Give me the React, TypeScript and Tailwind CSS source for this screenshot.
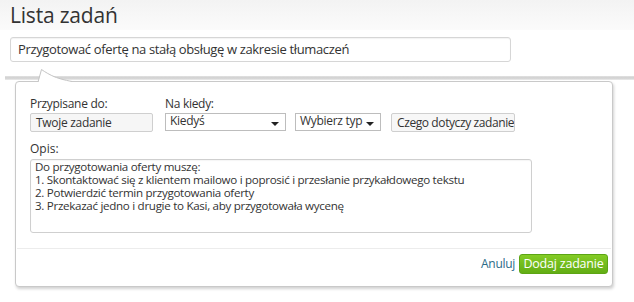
import React from "react";

export default function App() {
  return (
    <div
      className="relative w-[634px] h-[302px] overflow-hidden bg-white text-[#333]"
      style={{ fontFamily: '"Open Sans", "DejaVu Sans", sans-serif' }}
    >
      <div className="h-[30px] bg-gradient-to-b from-[#f3f3f3] to-[#fbfbfb] pl-[10px] pt-[1px]">
        <h1 className="text-[21px] leading-[28px] text-[#333] tracking-[-0.2px]">Lista zadań</h1>
      </div>
      <div className="ml-[10px] mt-[7px] w-[501px] h-[25px] border border-[#d6d6d6] rounded-[3px] px-[7px] flex items-center text-[13px] tracking-[-0.35px] shadow-[inset_0_1px_1px_rgba(0,0,0,0.05)]">
        Przygotować ofertę na stałą obsługę w zakresie tłumaczeń
      </div>
      <div className="mt-[14px] ml-[5px] h-[4px] bg-gradient-to-b from-[#e2e2e2] via-[#cfcfcf] to-[#ececec]" />
      <div className="relative ml-[15px] mt-[1px] w-[598px] h-[206px] bg-white border border-[#c9c9c9] rounded-[4px] shadow-[1px_2px_3px_rgba(0,0,0,0.18)] flex flex-col">
        <div className="px-[14px] pt-[14px]">
          <div className="flex text-[12px] tracking-[-0.3px]">
            <div className="w-[135px]">
              <div className="h-[16px] leading-[16px]">Przypisane do:</div>
              <div className="mt-[1px] w-[123px] h-[19px] border border-[#cfcfcf] rounded-[2px] bg-[#f6f6f6] px-[5px] leading-[17px]">Twoje zadanie</div>
            </div>
            <div className="w-[130px]">
              <div className="h-[16px] leading-[16px]">Na kiedy:</div>
              <div className="mt-[1px] w-[121px] h-[18px] border border-[#bdbdbd] bg-white pl-[4px] pr-[6px] flex justify-between leading-[14px]">
                <span>Kiedyś</span>
                <span className="mt-[8px] w-0 h-0 border-x-[4px] border-x-transparent border-t-[4px] border-t-[#222]" />
              </div>
            </div>
            <div className="w-[96px] pt-[17px]">
              <div className="w-[86px] h-[18px] border border-[#bdbdbd] bg-white pl-[4px] pr-[6px] flex justify-between leading-[14px]">
                <span>Wybierz typ</span>
                <span className="mt-[8px] w-0 h-0 border-x-[4px] border-x-transparent border-t-[4px] border-t-[#222]" />
              </div>
            </div>
            <div className="pt-[17px]">
              <div className="w-[124px] h-[19px] border border-[#cfcfcf] rounded-[2px] bg-[#f7f7f7] pl-[5px] leading-[17px] overflow-hidden whitespace-nowrap tracking-[-0.4px]">Czego dotyczy zadanie?</div>
            </div>
          </div>
          <div className="mt-[9px] text-[12px] h-[16px] leading-[16px]">Opis:</div>
          <div className="mt-[2px] w-[502px] h-[74px] border border-[#cfcfcf] rounded-[3px] px-[4px] pt-[0px] text-[11.6px] leading-[13px] tracking-[-0.3px] shadow-[inset_0_1px_1px_rgba(0,0,0,0.04)]">
            <div>Do przygotowania oferty muszę:</div>
            <div>1. Skontaktować się z klientem mailowo i poprosić i przesłanie przykałdowego tekstu</div>
            <div>2. Potwierdzić termin przygotowania oferty</div>
            <div>3. Przekazać jedno i drugie to Kasi, aby przygotowała wycenę</div>
          </div>
        </div>
        <div className="mt-[15px] mx-[1px] border-t border-[#ececec]" />
        <div className="flex justify-end items-center pr-[4px] pt-[5px] gap-[4px]">
          <span className="text-[12px] text-[#2b6a87] tracking-[-0.3px]">Anuluj</span>
          <button className="h-[20px] w-[89px] rounded-[3px] bg-gradient-to-b from-[#84cc25] to-[#62ad14] border border-[#5ca514] text-white text-[12.5px] leading-[18px] tracking-[-0.2px]">
            Dodaj zadanie
          </button>
        </div>
      </div>
      <svg className="absolute left-[37px] top-[68px]" width="36" height="15" viewBox="0 0 36 15">
        <path d="M1 15 L4.5 1.5 C8 4 13 7 18 9 C22 10.5 27 12 35 13.5 L35 15 Z" fill="#fff" />
        <path d="M1 14 L4.5 1.5 C8 4 13 7 18 9 C22 10.5 27 12 35 13.5" fill="none" stroke="#c4c4c4" strokeWidth="1" />
      </svg>
    </div>
  );
}
